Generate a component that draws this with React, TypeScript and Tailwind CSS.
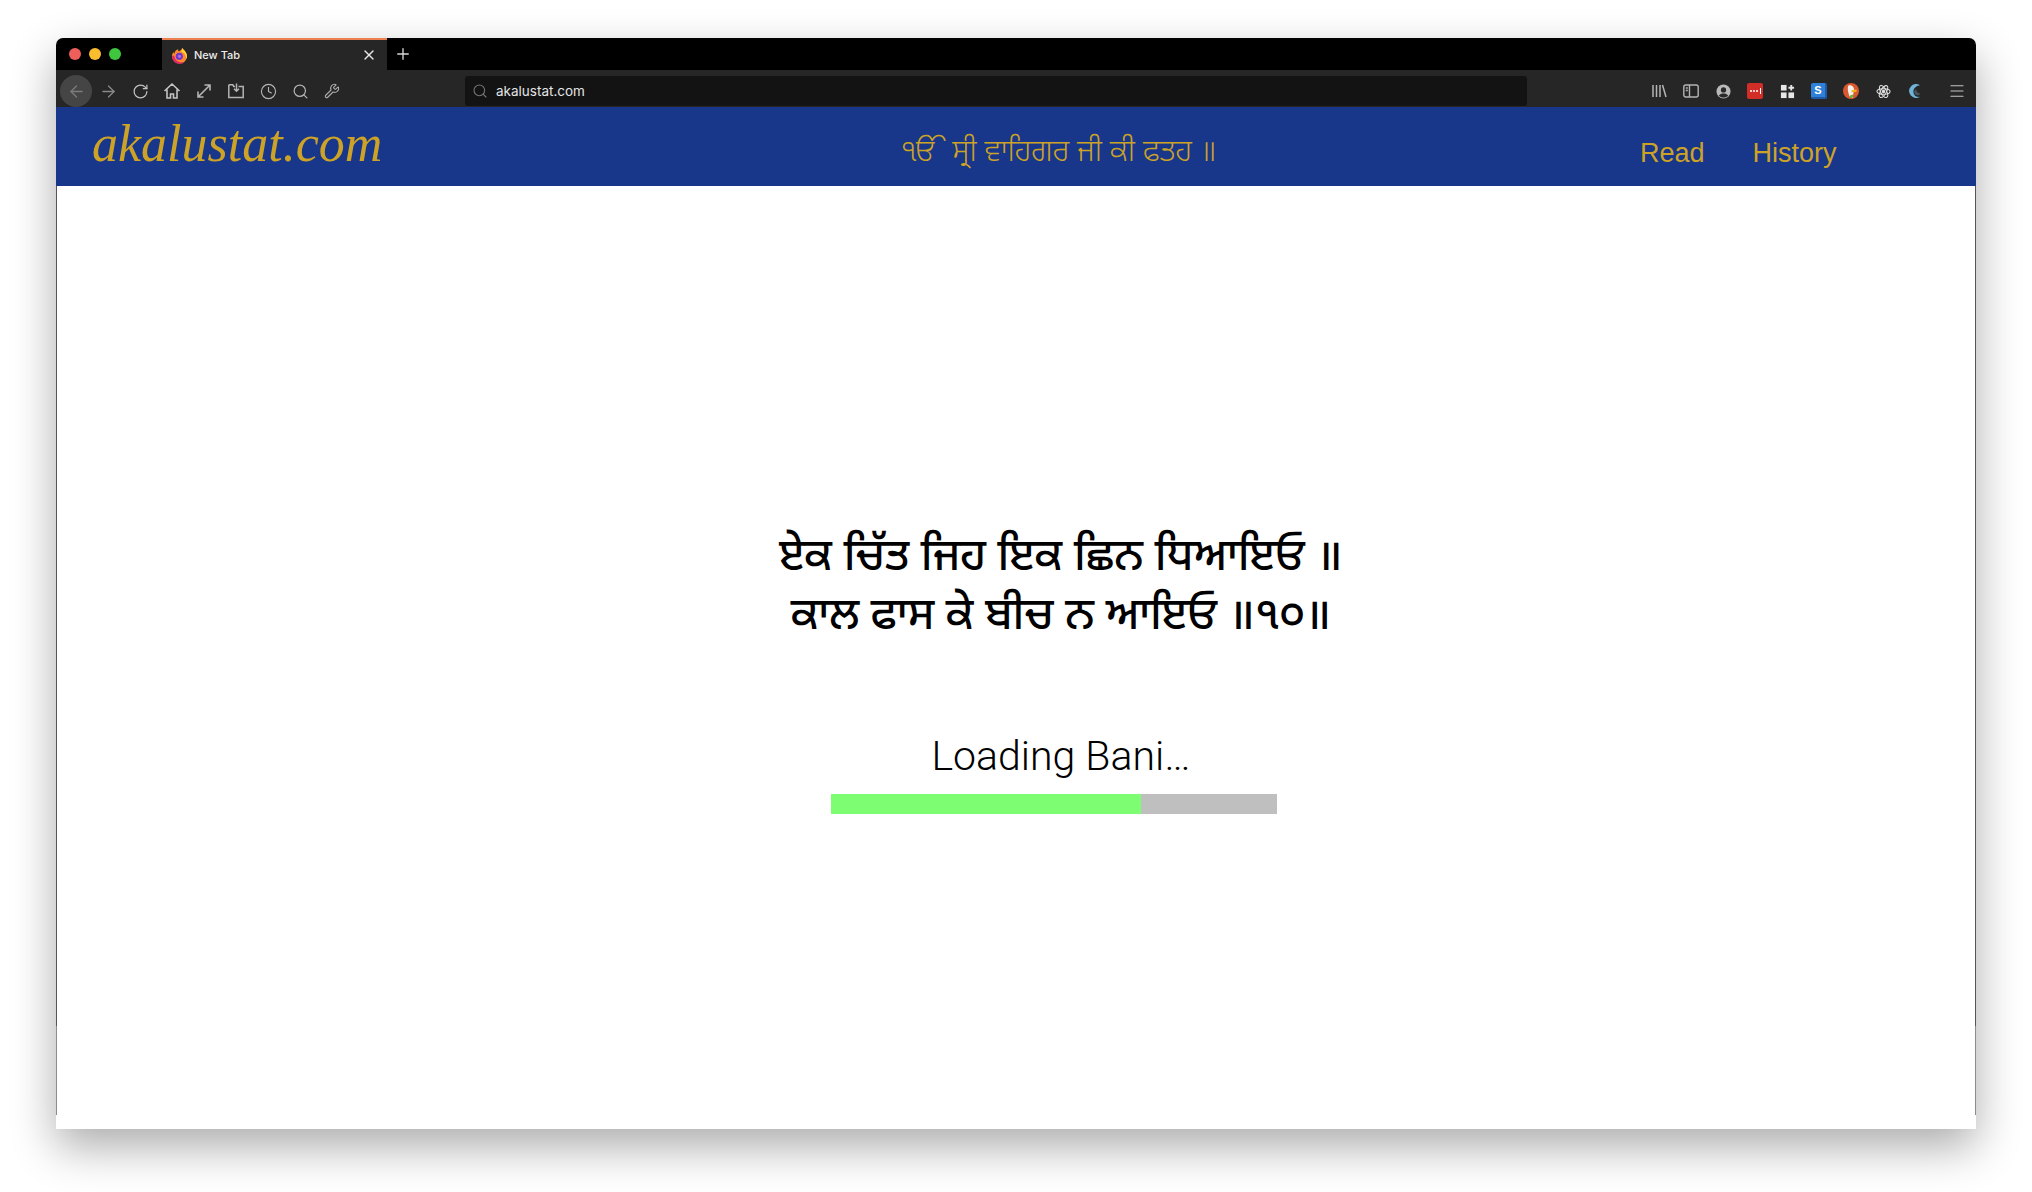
import React from 'react'
import {
  ArrowLeft,
  ArrowRight,
  RotateCw,
  Clock,
  Search,
  Wrench,
  Menu,
  Plus,
  X,
} from 'lucide-react'

const gold = 'text-[#cda327]'

function FirefoxLogo(): React.JSX.Element {
  return (
    <svg viewBox="0 0 16 16" className="w-[17px] h-[17px]">
      <path d="M10.500.8c.3 1.200 1.500 1.700 2.500 3 1.300 1.600 2 3 2 4.800a7 7 0 0 1-14 0c0-1.500.5-3 1.300-4 .1.800.4 1.300.9 1.700C3.300 3.800 5 2.300 6.800 2c-.4 1 0 1.600.9 2 1.200-.6 2.500-1.500 2.800-3.200z" fill="#ff8a2b" />
      <path d="M10.500.8c.3 1.200 1.500 1.700 2.500 3 1.300 1.600 2 3 2 4.800 0 1-.2 1.900-.6 2.700C14 7 12 5 9.500 4.500c.7-1 1-2.200 1-3.700z" fill="#ffd23a" />
      <path d="M1 8.600a7 7 0 0 0 11.500 5.400C8 15.500 3.500 13 3 8z" fill="#e5246f" />
      <circle cx="7.800" cy="8.700" r="3.400" fill="#6d37c8" />
      <circle cx="8" cy="8.800" r="1.500" fill="#b06be8" />
    </svg>
  )
}

function Expand(): React.JSX.Element {
  return (
    <svg viewBox="0 0 18 18" className="w-[18px] h-[18px]" fill="none" stroke="#b4b4b4" strokeWidth="1.6">
      <path d="M3 15 15 3M9.500 3H15v5.500M3 9.500V15h5.500" />
    </svg>
  )
}

function HomeIcon(): React.JSX.Element {
  return (
    <svg viewBox="0 0 18 18" className="w-[18px] h-[18px]" fill="none" stroke="#c4c4c4" strokeWidth="1.6">
      <path d="M1.500 9 9 2l7.500 7M4 7.500V16h3.500v-4h3v4H14V7.500" />
    </svg>
  )
}

function SaveIcon(): React.JSX.Element {
  return (
    <svg viewBox="0 0 18 18" className="w-[18px] h-[18px]" fill="none" stroke="#b4b4b4" strokeWidth="1.500">
      <path d="M1.800 2.800h4l1 1.700h1.200M11.500 4.500h4.700v11H1.800V2.800M9.500 1.500v7.500M7 6.800l2.500 2.500L12 6.800" />
    </svg>
  )
}

function LibraryIcon(): React.JSX.Element {
  return (
    <svg viewBox="0 0 16 16" className="w-[16px] h-[16px]" fill="none" stroke="#b4b4b4" strokeWidth="1.500">
      <path d="M2 2v12M5.500 2v12M9 2v12M11.500 2l3.500 12" />
    </svg>
  )
}

function SidebarIcon(): React.JSX.Element {
  return (
    <svg viewBox="0 0 16 16" className="w-[16px] h-[16px]" fill="none" stroke="#b4b4b4" strokeWidth="1.400">
      <rect x="0.800" y="2" width="14.400" height="12" rx="2" />
      <path d="M6.500 2v12M2.800 5h2M2.800 7.500h2" />
    </svg>
  )
}

function AccountIcon(): React.JSX.Element {
  return (
    <svg viewBox="0 0 16 16" className="w-[15px] h-[15px]">
      <circle cx="8" cy="8" r="7.500" fill="#b9b9b9" />
      <circle cx="8" cy="6.300" r="2.800" fill="#2a2a2a" />
      <path d="M3 12.600C4 10.600 6 10 8 10s4 .6 5 2.600C11.800 13.900 10 14.500 8 14.500s-3.800-.6-5-1.900z" fill="#2a2a2a" />
    </svg>
  )
}

function LastPassIcon(): React.JSX.Element {
  return (
    <div className="w-[16px] h-[16px] rounded-[2px] bg-[#d32d27] flex items-center justify-center gap-[1px]">
      <span className="w-[2px] h-[2px] rounded-full bg-white" />
      <span className="w-[2px] h-[2px] rounded-full bg-white" />
      <span className="w-[2px] h-[2px] rounded-full bg-white" />
      <span className="w-[1px] h-[6px] bg-white ml-[1px]" />
    </div>
  )
}

function GridIcon(): React.JSX.Element {
  return (
    <svg viewBox="0 0 16 16" className="w-[15px] h-[15px]" fill="#e6e6e6">
      <rect x="1" y="1" width="6" height="6" />
      <rect x="1" y="9" width="6" height="6" />
      <rect x="9" y="9" width="6" height="6" />
      <path d="M11 1h2v2h2v2h-2v2h-2V5H9V3h2z" />
    </svg>
  )
}

function StackIcon(): React.JSX.Element {
  return (
    <div className="w-[16px] h-[16px] rounded-[2px] bg-[#2f80d8] border-r-2 border-b-2 border-[#1d5aa8] flex items-center justify-center text-white text-[11px] font-bold">
      S
    </div>
  )
}

function DuckIcon(): React.JSX.Element {
  return (
    <svg viewBox="0 0 16 16" className="w-[16px] h-[16px]">
      <circle cx="8" cy="8" r="8" fill="#d9582f" />
      <path d="M5.500 2.500c3-.8 5.500 1.200 5.500 4l-.5 3-1 5.500H7.500C6 12 5 10 4.800 6c0-1.500 0-2.500.7-3.500z" fill="#f4f1ec" />
      <path d="M8.500 7.200l5-.7v2.200l-5 .5z" fill="#f2b51e" />
      <path d="M7 12.500l2.500-1 1 1.800-2 1.700H7z" fill="#5fb23b" />
    </svg>
  )
}

function AtomIcon(): React.JSX.Element {
  return (
    <svg viewBox="0 0 16 16" className="w-[15px] h-[15px]" fill="none" stroke="#e2e2e2" strokeWidth="1.100">
      <ellipse cx="8" cy="8" rx="7" ry="3" />
      <ellipse cx="8" cy="8" rx="7" ry="3" transform="rotate(60 8 8)" />
      <ellipse cx="8" cy="8" rx="7" ry="3" transform="rotate(120 8 8)" />
      <circle cx="8" cy="8" r="1.300" fill="#e2e2e2" />
    </svg>
  )
}

function MoonIcon(): React.JSX.Element {
  return (
    <svg viewBox="0 0 16 16" className="w-[16px] h-[16px]">
      <path d="M13 2.200A7 7 0 1 0 13 13.800C8 14.500 6 11 6.500 7.500 7 4.500 10 2.500 13 2.200z" fill="#6fb3d8" />
      <path d="M7 8.500l2-2.500 1 3 3.500 2-2.500 1.500-3-1z" fill="#46545e" />
    </svg>
  )
}

const leftIcons: React.JSX.Element[] = [
  <RotateCw size={17} color="#c4c4c4" strokeWidth={1.7} />,
  <HomeIcon />,
  <Expand />,
  <SaveIcon />,
  <Clock size={17} color="#b4b4b4" strokeWidth={1.6} />,
  <Search size={17} color="#b4b4b4" strokeWidth={1.7} />,
  <Wrench size={16} color="#a8a8a8" strokeWidth={1.7} />,
]

const rightIcons: React.JSX.Element[] = [
  <LibraryIcon />,
  <SidebarIcon />,
  <AccountIcon />,
  <LastPassIcon />,
  <GridIcon />,
  <StackIcon />,
  <DuckIcon />,
  <AtomIcon />,
  <MoonIcon />,
]

function Cell({ children }: { children: React.ReactNode }): React.JSX.Element {
  return <div className="w-[32px] h-[32px] flex items-center justify-center shrink-0">{children}</div>
}

export default function App(): React.JSX.Element {
  return (
    <div className="w-[2032px] h-[1192px] bg-white pt-[38px] pl-[56px] overflow-hidden font-['Liberation_Sans',sans-serif]">
      <div className="w-[1920px] h-[1091px] flex flex-col rounded-t-[7px] overflow-hidden shadow-[0_18px_45px_rgba(0,0,0,0.33)]">
        {/* tab strip */}
        <div className="h-[32px] bg-black flex items-center shrink-0">
          <div className="w-[106px] flex items-center gap-[8px] pl-[13px]">
            <span className="w-[12px] h-[12px] rounded-full bg-[#ee5f5b]" />
            <span className="w-[12px] h-[12px] rounded-full bg-[#f9bd2e]" />
            <span className="w-[12px] h-[12px] rounded-full bg-[#3fc63f]" />
          </div>
          <div className="w-[225px] h-full bg-[#262626] border-t-2 border-[#ee7f4e] flex items-center pl-[9px] pr-[10px]">
            <FirefoxLogo />
            <span className="ml-[6px] text-[11px] font-medium text-[#ececec] font-['Inter',sans-serif]">New Tab</span>
            <X size={16} color="#e8e8e8" strokeWidth={2} className="ml-auto" />
          </div>
          <Plus size={18} color="#d8d8d8" strokeWidth={1.8} className="ml-[7px]" />
        </div>
        {/* toolbar */}
        <div className="h-[37px] bg-[#262626] flex items-center pl-[4px] pt-[5px] shrink-0">
          <div className="w-[32px] h-[32px] rounded-full bg-[#454545] flex items-center justify-center shrink-0">
            <ArrowLeft size={19} color="#7c7c7c" strokeWidth={1.6} />
          </div>
          <Cell>
            <ArrowRight size={19} color="#8a8a8a" strokeWidth={1.6} />
          </Cell>
          {leftIcons.map((icon, i) => (
            <Cell key={i}>{icon}</Cell>
          ))}
          <div className="ml-[117px] w-[1062px] h-[30px] rounded-[3px] bg-[#131313] flex items-center pl-[7px] shrink-0">
            <Search size={16} color="#777777" strokeWidth={1.6} />
            <span className="ml-[8px] text-[13.5px] text-[#e4e4e4] font-['Inter',sans-serif]">akalustat.com</span>
          </div>
          <div className="ml-[116px] flex items-center">
            {rightIcons.map((icon, i) => (
              <Cell key={i}>{icon}</Cell>
            ))}
          </div>
          <Menu size={18} color="#c4c4c4" strokeWidth={1.6} className="ml-[17px]" />
        </div>
        {/* site header */}
        <div className="h-[79px] bg-[#18368a] flex items-center shrink-0">
          <div className={`w-[845px] pl-[36px] text-[52px] italic font-medium leading-none pb-[6px] font-['Liberation_Serif',cursive] ${gold}`}>
            akalustat.com
          </div>
          <div className={`w-[739px] pt-[14px] text-[30px] font-light leading-[40px] font-['Noto_Sans_Gurmukhi','Noto_Sans',sans-serif] ${gold}`}>
            ੴ ਸ੍ਰੀ ਵਾਹਿਗਰ ਜੀ ਕੀ ਫਤਹ ॥
          </div>
          <div className={`flex items-center gap-[48px] text-[27px] pt-[14px] ${gold}`}>
            <span>Read</span>
            <span>History</span>
          </div>
        </div>
        {/* page */}
        <div className="h-[840px] bg-white flex flex-col items-center border-x border-[#55555a] pl-[90px] pt-[344px] shrink-0">
          <div className="text-[44px] leading-[59px] font-medium text-black text-center font-['Noto_Sans_Gurmukhi','Noto_Sans',sans-serif]">
            <p>ਏਕ ਚਿੱਤ ਜਿਹ ਇਕ ਛਿਨ ਧਿਆਇਓ ॥</p>
            <p>ਕਾਲ ਫਾਸ ਕੇ ਬੀਚ ਨ ਆਇਓ ॥੧੦॥</p>
          </div>
          <p className="mt-[84px] text-[41px] leading-[48px] font-light text-black font-['Roboto',sans-serif]">
            Loading Bani…
          </p>
          <div className="mt-[14px] mr-[14px] w-[446px] h-[20px] bg-[#bfbfbf]">
            <div className="w-[310px] h-full bg-[#7dfd72]" />
          </div>
        </div>
        <div className="h-[89px] bg-white border-x border-[#8c8c90] shrink-0" />
        <div className="h-[14px] bg-white shrink-0" />
      </div>
    </div>
  )
}
